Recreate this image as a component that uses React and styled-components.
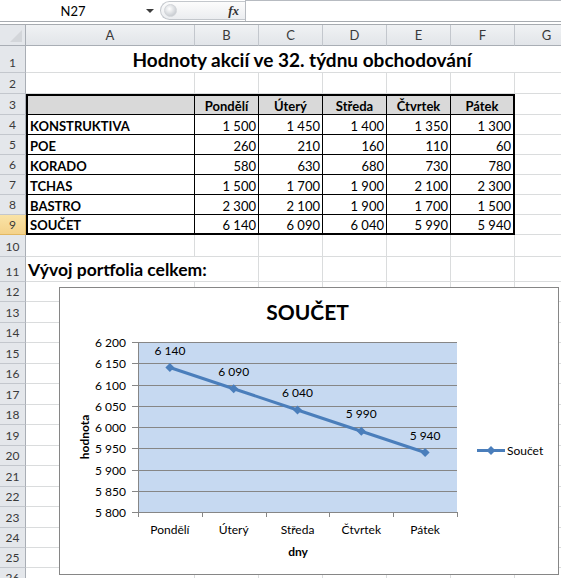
import React from "react";
import styled, { createGlobalStyle } from "styled-components";

const GRID = "#DADCDD";
const HEAD_LINE = "#A9AEB5";
const FONT = `Lato, "Noto Sans", "Noto Sans CJK SC", sans-serif`;

const GlobalStyle = createGlobalStyle`
  html, body {
    margin: 0;
    padding: 0;
    background: #fff;
  }
  body {
    font-family: ${FONT};
    overflow: hidden;
  }
`;

const DAYS = ["Pondělí", "Úterý", "Středa", "Čtvrtek", "Pátek"];
const STOCKS = [
  ["KONSTRUKTIVA", [1500, 1450, 1400, 1350, 1300]],
  ["POE", [260, 210, 160, 110, 60]],
  ["KORADO", [580, 630, 680, 730, 780]],
  ["TCHAS", [1500, 1700, 1900, 2100, 2300]],
  ["BASTRO", [2300, 2100, 1900, 1700, 1500]],
];
const SUMS = DAYS.map((_, i) => STOCKS.reduce((s, [, v]) => s + v[i], 0));
const LETTERS = ["A", "B", "C", "D", "E", "F", "G"];
// row heights, rows 1..26
const ROWS = [
  27, 21, 21, 20, 20, 20, 20, 20, 20, 22, 25,
  20, 21, 20, 21, 20, 21, 20, 21, 20, 21, 20, 21, 20,
  20, 20,
];

const fmt = (n) =>
  n >= 1000 ? `${Math.floor(n / 1000)}\u00a0${String(n % 1000).padStart(3, "0")}` : String(n);

const Page = styled.div`
  position: relative;
  width: 561px;
  height: 578px;
  overflow: hidden;
  background: #fff;
  font-family: ${FONT};
`;

const Toolbar = styled.div`
  display: flex;
  height: 22px;
  box-sizing: border-box;
  border-bottom: 1px solid #A7ABB0;
  background: #fff;
`;

const NameBox = styled.div`
  width: 160px;
  display: flex;
  align-items: center;
  font-size: 13px;
  color: #000;
`;

const NameText = styled.span`
  flex: 1;
  text-align: center;
`;

const DropArrow = styled.span`
  width: 0;
  height: 0;
  border-left: 4px solid transparent;
  border-right: 4px solid transparent;
  border-top: 4px solid #3c3c3c;
  margin-right: 6px;
  margin-top: 1px;
`;

const Splitter = styled.div`
  width: 85px;
  height: 19px;
  margin-top: 1px;
  box-sizing: border-box;
  border: 1px solid #C3C7CC;
  border-right: none;
  border-radius: 10px 0 0 10px;
  background: linear-gradient(#FCFCFC, #EBEDF0);
  display: flex;
  align-items: center;
  justify-content: space-between;
  padding: 0 6px 0 3px;
`;

const Knob = styled.span`
  width: 11px;
  height: 11px;
  border-radius: 50%;
  background: radial-gradient(circle at 40% 35%, #FFFFFF, #C9CDD2 75%);
  border: 1px solid #D2D5D9;
`;

const Fx = styled.span`
  font-family: "Liberation Serif", "DejaVu Serif", serif;
  font-style: italic;
  font-weight: 700;
  font-size: 13px;
  color: #333;
`;

const FormulaInput = styled.div`
  flex: 1;
  border-top: 1px solid #B7BBC1;
  border-left: 1px solid #B7BBC1;
  background: #fff;
`;

const Divider = styled.div`
  height: 3px;
  box-sizing: border-box;
  border-bottom: 1px solid #A7ABB0;
  background: #fff;
`;

const Sheet = styled.div`
  display: grid;
  grid-template-columns: 26px 169px repeat(6, 64px);
  grid-template-rows: 21px ${ROWS.map((h) => `${h}px`).join(" ")};
  width: 579px;
`;

const Corner = styled.div`
  position: relative;
  box-sizing: border-box;
  background: #E4E7EB;
  border-right: 1px solid ${HEAD_LINE};
  border-bottom: 1px solid ${HEAD_LINE};
  &::after {
    content: "";
    position: absolute;
    right: 3px;
    bottom: 3px;
    width: 12px;
    height: 12px;
    background: #D3D6DA;
    clip-path: polygon(100% 0, 100% 100%, 0 100%);
  }
`;

const ColHeader = styled.div`
  box-sizing: border-box;
  display: flex;
  align-items: center;
  justify-content: center;
  background: linear-gradient(#F0F2F4, #E2E5E9);
  border-right: 1px solid #C3C7CD;
  border-bottom: 1px solid ${HEAD_LINE};
  font-size: 13px;
  color: #3a3a3a;
`;

const RowHeader = styled.div`
  box-sizing: border-box;
  display: flex;
  align-items: flex-end;
  justify-content: center;
  background: ${(p) => (p.$active ? "linear-gradient(#F9E3A7, #F4D28A)" : "#E4E7EB")};
  border-right: 1px solid ${(p) => (p.$active ? "#E2B862" : HEAD_LINE)};
  border-bottom: 1px solid ${(p) => (p.$active ? "#E2B862" : "#C3C7CD")};
  font-size: 12px;
  line-height: 15px;
  padding-bottom: 2px;
  color: #3a3a3a;
`;

const Cell = styled.div`
  box-sizing: border-box;
  display: flex;
  align-items: flex-end;
  justify-content: ${(p) =>
    p.$align === "right" ? "flex-end" : p.$align === "center" ? "center" : "flex-start"};
  grid-column: span ${(p) => p.$span || 1};
  border-right: ${(p) => p.$right};
  border-bottom: ${(p) => p.$bottom};
  border-top: ${(p) => p.$top || "none"};
  border-left: ${(p) => p.$left || "none"};
  background: ${(p) => p.$fill || "#fff"};
  font-size: ${(p) => p.$size || 13}px;
  font-weight: ${(p) => (p.$bold ? 700 : 400)};
  padding: 0 2px ${(p) => p.$pb || 0}px;
  white-space: nowrap;
  color: #000;
  min-width: 0;
`;

const Chart = styled.div`
  position: absolute;
  left: 59px;
  top: 287px;
  width: 500px;
  height: 288px;
  box-sizing: border-box;
  border: 1px solid #868686;
  background: #fff;
`;

const ChartSvg = styled.svg`
  display: block;
  font-family: ${FONT};
`;

const ChartTitle = styled.text`
  font-size: 21px;
  font-weight: 700;
  fill: #000;
`;

const AxisLabel = styled.text`
  font-size: 12px;
  fill: #000;
`;

const AxisTitle = styled.text`
  font-size: 12px;
  font-weight: 700;
  fill: #000;
`;

const inTable = (r, c) => r >= 3 && r <= 9 && c >= 1 && c <= 6;

function edges(r, c0, c1) {
  const e = {
    right: `1px solid ${GRID}`,
    bottom: `1px solid ${GRID}`,
  };
  if (inTable(r, c1)) e.right = c1 === 6 ? "2px solid #000" : "1px solid #000";
  if (inTable(r, c0)) {
    e.bottom = r === 9 ? "2px solid #000" : "1px solid #000";
    if (r === 3) e.top = "2px solid #000";
    if (c0 === 1) e.left = "2px solid #000";
  }
  return e;
}

function rowCells(r) {
  const empty = () => ({});
  if (r === 1)
    return [
      {
        span: 7,
        content: "Hodnoty akcií ve 32. týdnu obchodování",
        bold: true,
        size: 19,
        align: "center",
        pb: 1,
      },
    ];
  if (r === 3)
    return [
      { fill: "#D9D9D9" },
      ...DAYS.map((d) => ({ content: d, bold: true, align: "center", fill: "#D9D9D9" })),
      empty(),
    ];
  if (r >= 4 && r <= 8) {
    const [name, vals] = STOCKS[r - 4];
    return [
      { content: name, bold: true },
      ...vals.map((v) => ({ content: fmt(v), align: "right" })),
      empty(),
    ];
  }
  if (r === 9)
    return [
      { content: "SOUČET", bold: true },
      ...SUMS.map((v) => ({ content: fmt(v), align: "right" })),
      empty(),
    ];
  if (r === 11)
    return [
      { span: 2, content: "Vývoj portfolia celkem:", bold: true, size: 17.5, pb: 1 },
      empty(),
      empty(),
      empty(),
      empty(),
      empty(),
    ];
  return Array.from({ length: 7 }, empty);
}

const PLOT = { x: 79, y: 55, w: 319, h: 170 };
const yOf = (v) => PLOT.y + ((6200 - v) / 400) * PLOT.h;
const catX = (i) => PLOT.x + ((i + 0.5) * PLOT.w) / 5;
const TICKS = [6200, 6150, 6100, 6050, 6000, 5950, 5900, 5850, 5800];
const LINE = "#4A7EBB";

const diamond = (x, y, s = 4.5) => `M${x} ${y - s}L${x + s} ${y}L${x} ${y + s}L${x - s} ${y}Z`;

function SumChart() {
  const pts = SUMS.map((v, i) => [catX(i), yOf(v)]);
  return (
    <Chart>
      <ChartSvg width="498" height="286" viewBox="1 1 498 286">
        <ChartTitle x="248.5" y="33" textAnchor="middle">
          SOUČET
        </ChartTitle>
        <rect x={PLOT.x} y={PLOT.y} width={PLOT.w} height={PLOT.h} fill="#C6D9F1" />
        {TICKS.map((v) => {
          const gy = Math.round(yOf(v)) + 0.5;
          return (
            <g key={v}>
              <line x1={PLOT.x - 6} x2={PLOT.x + PLOT.w} y1={gy} y2={gy} stroke="#868686" />
              <AxisLabel x="67" y={gy + 4} textAnchor="end">
                {fmt(v)}
              </AxisLabel>
            </g>
          );
        })}
        <line
          x1={PLOT.x + 0.5}
          x2={PLOT.x + 0.5}
          y1={PLOT.y}
          y2={PLOT.y + PLOT.h}
          stroke="#868686"
        />
        {[0, 1, 2, 3, 4, 5].map((k) => {
          const tx = Math.round(PLOT.x + (k * PLOT.w) / 5) + 0.5;
          return (
            <line
              key={k}
              x1={tx}
              x2={tx}
              y1={PLOT.y + PLOT.h}
              y2={PLOT.y + PLOT.h + 5}
              stroke="#868686"
            />
          );
        })}
        {DAYS.map((d, i) => (
          <AxisLabel key={d} x={catX(i)} y="247" textAnchor="middle">
            {d}
          </AxisLabel>
        ))}
        <AxisTitle x="239" y="269" textAnchor="middle">
          dny
        </AxisTitle>
        <AxisTitle x="0" y="0" textAnchor="middle" transform="translate(30 150) rotate(-90)">
          hodnota
        </AxisTitle>
        <polyline
          points={pts.map((p) => p.join(",")).join(" ")}
          fill="none"
          stroke={LINE}
          strokeWidth="3"
          strokeLinejoin="round"
        />
        {pts.map(([x, y], i) => (
          <g key={i}>
            <path d={diamond(x, y)} fill={LINE} />
            <AxisLabel x={x} y={y - 13} textAnchor="middle">
              {fmt(SUMS[i])}
            </AxisLabel>
          </g>
        ))}
        <line x1="418" x2="446" y1="163.5" y2="163.5" stroke={LINE} strokeWidth="3" />
        <path d={diamond(432, 163.5)} fill={LINE} />
        <AxisLabel x="448" y="168">
          Součet
        </AxisLabel>
      </ChartSvg>
    </Chart>
  );
}

export default function App() {
  return (
    <Page>
      <GlobalStyle />
      <Toolbar>
        <NameBox>
          <NameText>N27</NameText>
          <DropArrow />
        </NameBox>
        <Splitter>
          <Knob />
          <Fx>fx</Fx>
        </Splitter>
        <FormulaInput />
      </Toolbar>
      <Divider />
      <Sheet>
        <Corner />
        {LETTERS.map((l) => (
          <ColHeader key={l}>{l}</ColHeader>
        ))}
        {ROWS.map((_, idx) => {
          const r = idx + 1;
          let c = 1;
          return (
            <React.Fragment key={r}>
              <RowHeader $active={r === 9}>{r}</RowHeader>
              {rowCells(r).map((cell, i) => {
                const span = cell.span || 1;
                const e = edges(r, c, c + span - 1);
                c += span;
                return (
                  <Cell
                    key={i}
                    $span={span}
                    $right={e.right}
                    $bottom={e.bottom}
                    $top={e.top}
                    $left={e.left}
                    $fill={cell.fill}
                    $bold={cell.bold}
                    $align={cell.align}
                    $size={cell.size}
                    $pb={cell.pb}
                  >
                    {cell.content}
                  </Cell>
                );
              })}
            </React.Fragment>
          );
        })}
      </Sheet>
      <SumChart />
    </Page>
  );
}
